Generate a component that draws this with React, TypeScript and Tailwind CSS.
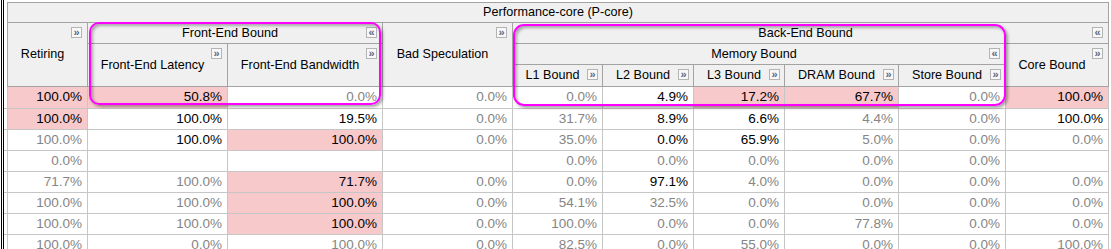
import React from "react";

type Cell = [string, "p" | "b" | "g" | ""];

const rows: Cell[][] = [
  [["100.0%", "p"], ["50.8%", "p"], ["0.0%", "g"], ["0.0%", "g"], ["0.0%", "g"], ["4.9%", "b"], ["17.2%", "p"], ["67.7%", "p"], ["0.0%", "g"], ["100.0%", "p"]],
  [["100.0%", "p"], ["100.0%", "b"], ["19.5%", "b"], ["0.0%", "g"], ["31.7%", "g"], ["8.9%", "b"], ["6.6%", "b"], ["4.4%", "g"], ["0.0%", "g"], ["100.0%", "b"]],
  [["100.0%", "g"], ["100.0%", "b"], ["100.0%", "p"], ["0.0%", "g"], ["35.0%", "g"], ["0.0%", "b"], ["65.9%", "b"], ["5.0%", "g"], ["0.0%", "g"], ["0.0%", "g"]],
  [["0.0%", "g"], ["", ""], ["", ""], ["", ""], ["0.0%", "g"], ["0.0%", "g"], ["0.0%", "g"], ["0.0%", "g"], ["0.0%", "g"], ["", ""]],
  [["71.7%", "g"], ["100.0%", "g"], ["71.7%", "p"], ["0.0%", "g"], ["0.0%", "g"], ["97.1%", "b"], ["4.0%", "g"], ["0.0%", "g"], ["0.0%", "g"], ["0.0%", "g"]],
  [["100.0%", "g"], ["100.0%", "g"], ["100.0%", "p"], ["0.0%", "g"], ["54.1%", "g"], ["32.5%", "g"], ["0.0%", "g"], ["0.0%", "g"], ["0.0%", "g"], ["0.0%", "g"]],
  [["100.0%", "g"], ["100.0%", "g"], ["100.0%", "p"], ["0.0%", "g"], ["100.0%", "g"], ["0.0%", "g"], ["0.0%", "g"], ["77.8%", "g"], ["0.0%", "g"], ["0.0%", "g"]],
  [["100.0%", "g"], ["0.0%", "g"], ["100.0%", "g"], ["0.0%", "g"], ["82.5%", "g"], ["0.0%", "g"], ["55.0%", "g"], ["0.0%", "g"], ["0.0%", "g"], ["100.0%", "g"]],
];

function Btn({ c, d }: { c: string; d?: boolean }) {
  return (
    <span
      className={
        d
          ? "absolute top-[4px] right-[4px] flex h-[11px] w-[11px] items-center justify-center border border-[#b4b4b4] bg-[#f8f8f8] pb-[1px] text-[11px] font-bold leading-none text-[#5a6985]"
          : "absolute top-[4px] right-[5px] flex h-[11px] w-[11px] items-center justify-center border border-[#b4b4b4] bg-[#f8f8f8] pb-[1px] text-[11px] font-bold leading-none text-[#5a6985]"
      }
    >
      {c}
    </span>
  );
}

const hd =
  "relative flex items-center justify-center bg-[#f0f0f0] border-r border-b border-[#a3a3a3] text-[12.6px] text-black pr-[10px] whitespace-nowrap";

function bodyClass(k: string) {
  if (k === "p")
    return "flex items-center justify-end pr-[5px] border-r border-b border-[#c6c6c6] text-[13.5px] bg-[#f7c9cb] text-black";
  if (k === "b")
    return "flex items-center justify-end pr-[5px] border-r border-b border-[#c6c6c6] text-[13.5px] bg-white text-black";
  return "flex items-center justify-end pr-[5px] border-r border-b border-[#c6c6c6] text-[13.5px] bg-white text-[#858585]";
}

export default function App() {
  return (
    <div className="relative flex h-[249px] w-[1111px] overflow-hidden bg-white font-['Liberation_Sans',Arial,sans-serif]">
      <div className="flex h-full w-[4px] shrink-0">
        <div className="ml-[1px] h-full w-[1px] bg-black" />
        <div className="ml-[1px] h-full w-[1px] bg-black" />
      </div>
      <div className="mt-[2px] grid grid-cols-[4px_80px_140px_155px_130px_90px_91px_91px_114px_107px_103px] grid-rows-[21px_21px_21px_22px_22px] auto-rows-[21px] self-start">
        <div className="col-start-1 row-start-1 row-span-4 border-r border-[#a3a3a3] bg-white" />
        <div className="col-start-2 col-span-10 row-start-1 flex items-center justify-center border-t border-r border-b border-[#a3a3a3] bg-[#f0f0f0] text-[12.6px] text-black">
          Performance-core (P-core)
        </div>

        <div className={hd + " col-start-2 row-start-2 row-span-3"}>
          Retiring
          <Btn c="»" />
        </div>
        <div className={hd + " col-start-3 col-span-2 row-start-2"}>
          Front-End Bound
          <Btn c="«" />
        </div>
        <div className={hd + " col-start-5 row-start-2 row-span-3"}>
          Bad Speculation
          <Btn c="»" />
        </div>
        <div className={hd + " col-start-6 col-span-6 row-start-2"}>
          Back-End Bound
          <Btn c="«" />
        </div>

        <div className={hd + " col-start-3 row-start-3 row-span-2"}>
          Front-End Latency
          <Btn c="»" />
        </div>
        <div className={hd + " col-start-4 row-start-3 row-span-2"}>
          Front-End Bandwidth
          <Btn c="»" />
        </div>
        <div className={hd + " col-start-6 col-span-5 row-start-3"}>
          Memory Bound
          <Btn c="«" />
        </div>
        <div className={hd + " col-start-11 row-start-3 row-span-2"}>
          Core Bound
          <Btn c="»" />
        </div>

        <div className={hd + " col-start-6 row-start-4"}>
          L1 Bound
          <Btn c="»" d />
        </div>
        <div className={hd + " col-start-7 row-start-4"}>
          L2 Bound
          <Btn c="»" d />
        </div>
        <div className={hd + " col-start-8 row-start-4"}>
          L3 Bound
          <Btn c="»" d />
        </div>
        <div className={hd + " col-start-9 row-start-4"}>
          DRAM Bound
          <Btn c="»" d />
        </div>
        <div className={hd + " col-start-10 row-start-4"}>
          Store Bound
          <Btn c="»" d />
        </div>

        {rows.map((r, i) => (
          <React.Fragment key={i}>
            <div className="border-r border-b border-[#c6c6c6] bg-white" />
            {r.map(([v, k], j) => (
              <div key={j} className={bodyClass(k)}>
                {v}
              </div>
            ))}
          </React.Fragment>
        ))}
      </div>

      <div className="pointer-events-none absolute left-[89px] top-[22px] h-[83px] w-[292px] rounded-[10px] border-2 border-[#ff00ff] shadow-[2px_2px_3px_rgba(0,0,0,0.35),inset_2px_2px_3px_rgba(0,0,0,0.3)]" />
      <div className="pointer-events-none absolute left-[513px] top-[24px] h-[82px] w-[493px] rounded-[11px] border-2 border-[#ff00ff] shadow-[2px_2px_3px_rgba(0,0,0,0.35),inset_2px_2px_3px_rgba(0,0,0,0.3)]" />
    </div>
  );
}
